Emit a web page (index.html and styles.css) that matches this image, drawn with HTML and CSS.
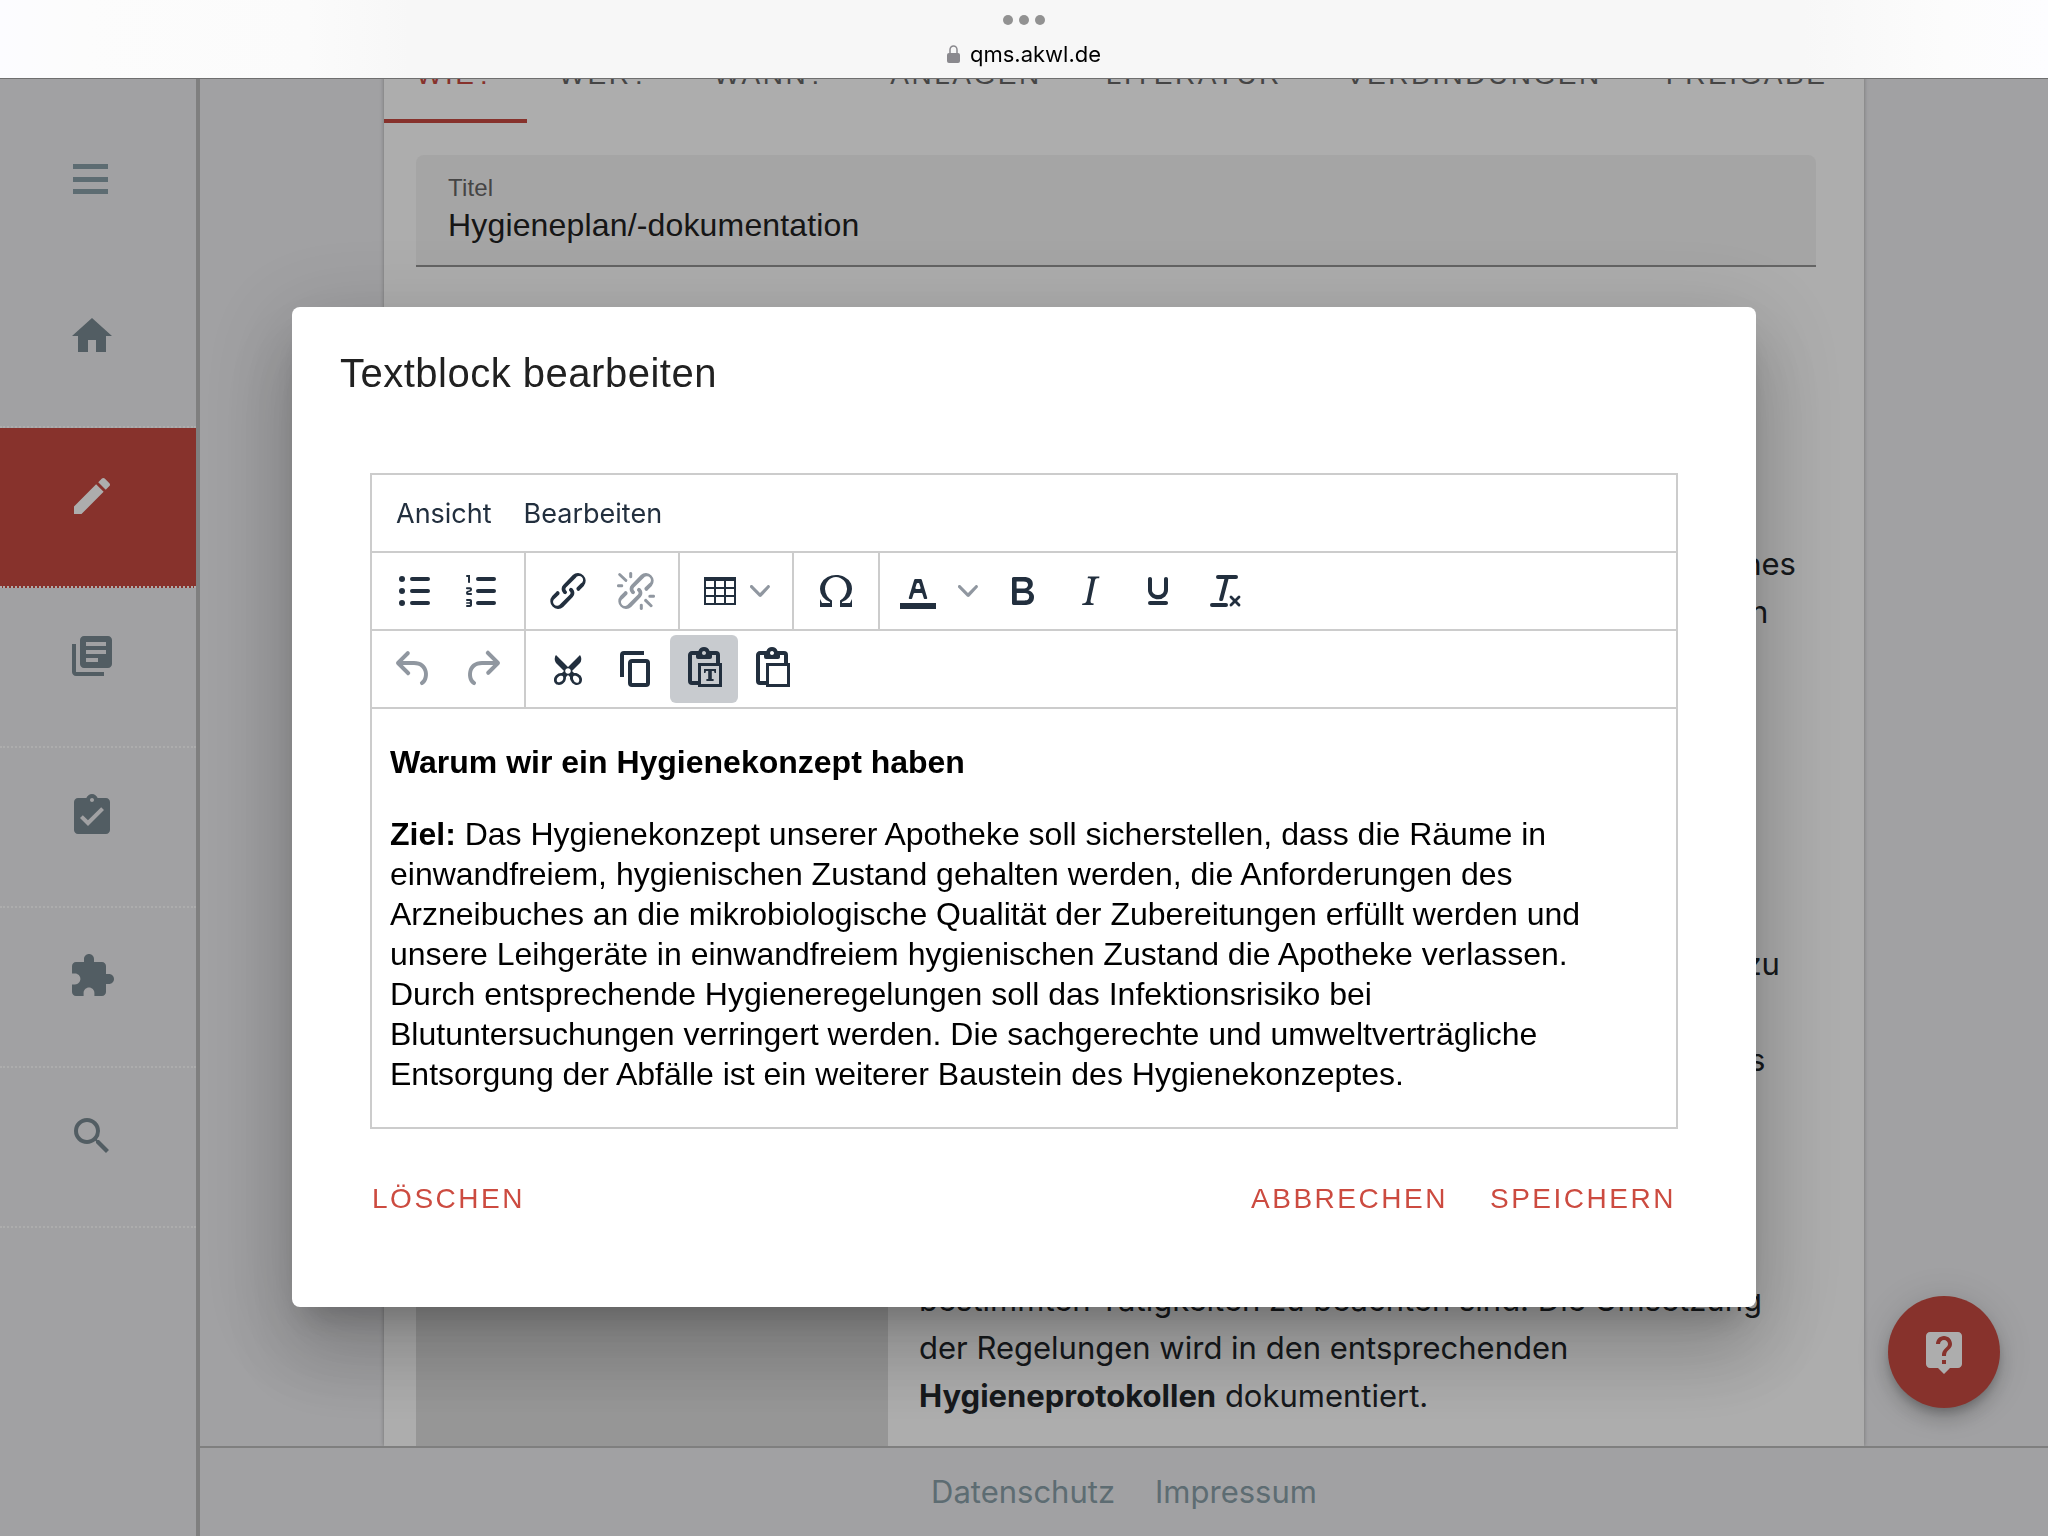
FILE: index.html
```html
<!DOCTYPE html>
<html lang="de">
<head>
<meta charset="utf-8">
<meta name="viewport" content="width=device-width, initial-scale=1">
<title>Hygieneplan/-dokumentation</title>
<link rel="stylesheet" href="styles.css">
</head>
<body>
<header class="topbar">
  <div class="topbar__dots"><span></span><span></span><span></span></div>
  <div class="topbar__url">
    <svg class="topbar__lock" viewBox="0 0 13 18" aria-hidden="true"><rect y="8" width="13" height="10" rx="2" fill="#8a898e"/><path d="M3 9V4.800a3.500 3.800 0 0 1 7 0V9" fill="none" stroke="#8a898e" stroke-width="1.500"/></svg>
    <span>qms.akwl.de</span>
  </div>
</header>

<div class="app">
  <nav class="sidebar" aria-label="Hauptmenü">
    <button class="sidebar__item sidebar__item--menu" type="button" aria-label="Menü">
      <svg class="icon" viewBox="0 0 48 48"><path d="M5 12h35v5H5zM5 25h35v5H5zM5 37h35v5H5z"/></svg>
    </button>
    <a class="sidebar__item" href="#" aria-label="Start">
      <svg class="icon" viewBox="0 0 24 24"><path d="M10 20v-6h4v6h5v-8h3L12 3 2 12h3v8h5z"/></svg>
    </a>
    <a class="sidebar__item sidebar__item--active" href="#" aria-label="Bearbeiten">
      <svg class="icon" viewBox="0 0 24 24"><path d="M20.710 7.040c.39-.39.39-1.040 0-1.410l-2.340-2.340c-.37-.39-1.020-.39-1.410 0l-1.840 1.830 3.750 3.750M3 17.250V21h3.750L17.810 9.930l-3.750-3.750L3 17.250z"/></svg>
    </a>
    <a class="sidebar__item" href="#" aria-label="Bibliothek">
      <svg class="icon" viewBox="0 0 24 24"><path d="M4 6H2v14c0 1.100.9 2 2 2h14v-2H4V6zm16-4H8c-1.100 0-2 .9-2 2v12c0 1.100.9 2 2 2h12c1.100 0 2-.9 2-2V4c0-1.100-.9-2-2-2zm-1 9H9V9h10v2zm-4 4H9v-2h6v2zm4-8H9V5h10v2z"/></svg>
    </a>
    <a class="sidebar__item" href="#" aria-label="Aufgaben">
      <svg class="icon" viewBox="0 0 24 24"><path fill-rule="evenodd" d="M19 3h-4.180C14.400 1.840 13.300 1 12 1s-2.400.84-2.820 2H5c-1.100 0-2 .9-2 2v14c0 1.100.9 2 2 2h14c1.100 0 2-.9 2-2V5c0-1.100-.9-2-2-2zm-7 0c.55 0 1 .45 1 1s-.45 1-1 1-1-.45-1-1 .45-1 1-1zm-2 14l-4-4 1.410-1.410L10 14.170l6.590-6.590L18 9l-8 8z"/></svg>
    </a>
    <a class="sidebar__item" href="#" aria-label="Erweiterungen">
      <svg class="icon" viewBox="0 0 24 24"><path d="M20.500 11H19V7c0-1.100-.9-2-2-2h-4V3.500C13 2.120 11.880 1 10.500 1S8 2.120 8 3.500V5H4c-1.100 0-1.990.9-1.990 2v3.800H3.500c1.490 0 2.700 1.210 2.700 2.700s-1.210 2.700-2.700 2.700H2V20c0 1.100.9 2 2 2h3.800v-1.500c0-1.490 1.210-2.700 2.700-2.700s2.700 1.210 2.700 2.700V22H17c1.100 0 2-.9 2-2v-4h1.500c1.380 0 2.500-1.120 2.500-2.500S21.880 11 20.500 11z"/></svg>
    </a>
    <a class="sidebar__item" href="#" aria-label="Suche">
      <svg class="icon" viewBox="0 0 24 24"><path d="M15.500 14h-.79l-.28-.27A6.470 6.470 0 0 0 16 9.500 6.500 6.500 0 1 0 9.500 16c1.610 0 3.090-.59 4.230-1.570l.27.28v.79l5 4.990L20.490 19l-4.990-5zm-6 0C7.010 14 5 11.990 5 9.500S7.010 5 9.500 5 14 7.010 14 9.500 11.990 14 9.500 14z"/></svg>
    </a>
  </nav>

  <div class="page">
    <main class="card">
      <div class="tabs" role="tablist">
        <button class="tab tab--active" type="button" role="tab" aria-selected="true">WIE?</button>
        <button class="tab" type="button" role="tab">WER?</button>
        <button class="tab" type="button" role="tab">WANN?</button>
        <button class="tab" type="button" role="tab">ANLAGEN</button>
        <button class="tab" type="button" role="tab">LITERATUR</button>
        <button class="tab" type="button" role="tab">VERBINDUNGEN</button>
        <button class="tab" type="button" role="tab">FREIGABE</button>
      </div>
      <div class="card__body">
        <div class="field">
          <label class="field__label" for="titel">Titel</label>
          <input class="field__input" id="titel" type="text" value="Hygieneplan/-dokumentation">
        </div>
        <section class="block">
          <div class="block__side"></div>
          <div class="block__text">
            <p>Hygiene in der Apotheke<br>
            und ihre Umsetzung<br>
            Ein Hygieneplan beschreibt die Maßnahmen innerhalb eines<br>
            Betriebes, und legt somit die Verantwortung der Personen</p>
            <p>für die Durchführung fest.<br>
            Der Plan wird regelmäßig geprüft<br>
            und bei Bedarf angepasst.<br>
            Änderungen werden dokumentiert<br>
            und allen bekannt gegeben.<br>
            Schulungen finden jährlich statt.<br>
            Alle Mitarbeiter sind verpflichtet, die Regelungen soweit zu<br>
            beachten.<br>
            Sie gelten immer für alle Räume und Geräte des Betriebes<br>
            und nennen alle Punkte, die<br>
            in den Bereichen und bei<br>
            den einzelnen Schritten sowie<br>
            in der täglichen Arbeit bei<br>
            bestimmten Tätigkeiten zu beachten sind. Die Umsetzung<br>
            der Regelungen wird in den entsprechenden<br>
            <strong>Hygieneprotokollen</strong> dokumentiert.</p>
          </div>
        </section>
      </div>
    </main>
    <footer class="footer">
      <a href="#">Datenschutz</a>
      <a href="#">Impressum</a>
    </footer>
  </div>
</div>

<button class="fab" type="button" aria-label="Hilfe">
  <svg class="icon" viewBox="0 0 24 24"><path d="M19 2H5c-1.100 0-2 .9-2 2v14c0 1.100.9 2 2 2h4l3 3 3-3h4c1.100 0 2-.9 2-2V4c0-1.100-.9-2-2-2zm-6 16h-2v-2h2v2zm2.070-7.750l-.9.92C13.450 11.900 13 12.500 13 14h-2v-.5c0-1.100.45-2.100 1.170-2.830l1.240-1.260c.37-.36.59-.86.59-1.410 0-1.100-.9-2-2-2s-2 .9-2 2H8c0-2.210 1.790-4 4-4s4 1.790 4 4c0 .88-.36 1.680-.93 2.250z"/></svg>
</button>

<div class="overlay">
  <div class="dialog" role="dialog" aria-modal="true" aria-labelledby="dialog-title">
    <h2 class="dialog__title" id="dialog-title">Textblock bearbeiten</h2>
    <div class="editor">
      <div class="editor__menubar">
        <button class="menu-btn" type="button">Ansicht</button>
        <button class="menu-btn" type="button">Bearbeiten</button>
      </div>
      <div class="toolbar">
        <div class="toolbar__group">
          <button class="tool" type="button" aria-label="Aufzählung"><svg class="icon" viewBox="0 0 24 24"><path d="M11 5h8a1 1 0 0 1 0 2h-8a1 1 0 0 1 0-2zm0 6h8a1 1 0 0 1 0 2h-8a1 1 0 0 1 0-2zm0 6h8a1 1 0 0 1 0 2h-8a1 1 0 0 1 0-2z"/><circle cx="6" cy="6" r="1.500"/><circle cx="6" cy="12" r="1.500"/><circle cx="6" cy="18" r="1.500"/></svg></button>
          <button class="tool" type="button" aria-label="Nummerierte Liste"><svg class="icon" viewBox="0 0 24 24"><path d="M10 17h8a1 1 0 0 1 0 2h-8a1 1 0 0 1 0-2zm0-6h8a1 1 0 0 1 0 2h-8a1 1 0 0 1 0-2zm0-6h8a1 1 0 1 1 0 2h-8a1 1 0 1 1 0-2zM6 4v3.500c0 .3-.2.5-.5.5a.5.5 0 0 1-.5-.5V5h-.5a.5.5 0 0 1 0-1H6zm-1 8.800l.2.2h1.300c.3 0 .5.2.5.5s-.2.5-.5.5H4.900a1 1 0 0 1-.9-1V13c0-.4.3-.8.6-1l1.200-.4.2-.3a.2.2 0 0 0-.2-.2H4.500a.5.5 0 0 1-.5-.5c0-.3.2-.5.5-.5h1.600c.5 0 .9.4.9 1v.1c0 .4-.3.8-.6 1l-1.200.4-.2.3zM7 17v2c0 .6-.4 1-1 1H4.500a.5.5 0 0 1 0-1h1.200c.2 0 .3-.1.3-.3 0-.2-.1-.3-.3-.3H4.400a.4.4 0 1 1 0-.8h1.300c.2 0 .3-.1.3-.3 0-.2-.1-.3-.3-.3H4.500a.5.5 0 1 1 0-1H6c.6 0 1 .4 1 1z"/></svg></button>
        </div>
        <div class="toolbar__group">
          <button class="tool" type="button" aria-label="Link"><svg class="icon" viewBox="0 0 24 24"><path d="M6.200 12.300a1 1 0 0 1 1.400 1.400l-2.100 2a2 2 0 1 0 2.700 2.800l4.800-4.800a1 1 0 0 0 0-1.400 1 1 0 1 1 1.400-1.300 2.900 2.900 0 0 1 0 4L9.600 20a3.900 3.900 0 0 1-5.500-5.500l2-2zm11.600-.6a1 1 0 0 1-1.400-1.400l2-2a2 2 0 1 0-2.600-2.800L11 10.300a1 1 0 0 0 0 1.400A1 1 0 1 1 9.600 13a2.900 2.900 0 0 1 0-4L14.400 4a3.900 3.900 0 0 1 5.500 5.500l-2 2z"/></svg></button>
          <button class="tool tool--disabled" type="button" disabled aria-label="Link entfernen"><svg class="icon" viewBox="0 0 24 24"><path d="M6.200 12.300a1 1 0 0 1 1.400 1.400l-2 2a2 2 0 1 0 2.600 2.800l4.800-4.800a1 1 0 0 0 0-1.400 1 1 0 1 1 1.400-1.300 2.900 2.900 0 0 1 0 4L9.600 20a3.900 3.900 0 0 1-5.500-5.500l2-2zm11.600-.6a1 1 0 0 1-1.400-1.400l2.100-2a2 2 0 1 0-2.700-2.800L11 10.300a1 1 0 0 0 0 1.400A1 1 0 1 1 9.600 13a2.900 2.900 0 0 1 0-4L14.400 4a3.900 3.900 0 0 1 5.500 5.500l-2 2zM7.600 6.300a.8.8 0 0 1-1 1.100L3.300 4.200a.7.7 0 1 1 1-1l3.200 3.100zM5.100 8.600a.8.8 0 0 1 0 1.500H3a.8.8 0 0 1 0-1.500h2.100zm5-3.500a.8.8 0 0 1-1.500 0V3a.8.8 0 0 1 1.500 0v2.100zm6 11.800a.8.8 0 0 1 1-1l3.200 3.200a.8.8 0 0 1-1 1L16 17zm-2.200 2a.8.8 0 0 1 1.500 0V21a.8.8 0 0 1-1.500 0v-2.100zm5-3.500a.7.7 0 1 1 0-1.500H21a.8.8 0 0 1 0 1.500h-2.100z"/></svg></button>
        </div>
        <div class="toolbar__group">
          <button class="tool tool--select" type="button" aria-label="Tabelle"><svg class="icon" viewBox="0 0 24 24"><path fill-rule="evenodd" d="M4 5h16v14H4zM5 7v3h4V7zm5 0v3h4V7zm5 0v3h4V7zM5 11v3h4v-3zm5 0v3h4v-3zm5 0v3h4v-3zM5 15v3h4v-3zm5 0v3h4v-3zm5 0v3h4v-3z"/></svg><svg class="chevron" viewBox="0 0 10 10"><path d="M8.700 2.200c.3-.3.8-.3 1 0 .4.4.4.9 0 1.200L5.700 7.800c-.3.3-.9.3-1.200 0L.2 3.400a.8.8 0 0 1 0-1.200c.3-.3.8-.3 1.100 0L5 6l3.700-3.800z"/></svg></button>
        </div>
        <div class="toolbar__group">
          <button class="tool" type="button" aria-label="Sonderzeichen"><svg class="icon" viewBox="0 0 24 24"><path d="M15 18h4l1-2v4h-6v-3.300l1.400-1a6 6 0 0 0 1.800-2.900 6.300 6.300 0 0 0-.1-4.100 5.800 5.800 0 0 0-3-3.200c-.6-.3-1.300-.5-2.100-.5a5.100 5.100 0 0 0-3.900 1.800 6.300 6.300 0 0 0-1.300 6 6.200 6.200 0 0 0 1.800 3l1.400.9V20H4v-4l1 2h4v-.5l-2-1L5.400 15A6.500 6.500 0 0 1 4 11c0-1 .2-1.900.6-2.700A7 7 0 0 1 7.800 5 9 9 0 0 1 12 4c1.500 0 2.900.3 4.200 1a7.100 7.100 0 0 1 3.300 3.300c.3.8.5 1.700.5 2.700a6.500 6.500 0 0 1-1.400 4L17 16.500l-2 1v.5z"/></svg></button>
        </div>
        <div class="toolbar__group">
          <button class="tool tool--color" type="button" aria-label="Textfarbe"><svg class="icon" viewBox="0 0 24 24"><path d="M3 18h18v3H3z"/><path fill-rule="evenodd" d="M8.700 16h-.8a.5.5 0 0 1-.5-.6l2.700-9c.1-.3.3-.4.5-.4h2.800c.2 0 .4.1.5.4l2.700 9a.5.5 0 0 1-.5.6h-.8a.5.5 0 0 1-.4-.4l-.7-2.200c0-.3-.3-.4-.5-.4h-3.400c-.2 0-.4.1-.5.4l-.7 2.200c0 .3-.2.4-.4.4zm2.600-7.600l-.6 2a.5.5 0 0 0 .5.6h1.600a.5.5 0 0 0 .5-.6l-.6-2c0-.3-.3-.4-.5-.4h-.4c-.2 0-.4.1-.5.4z"/></svg></button>
          <button class="tool tool--arrow" type="button" aria-label="Farbe wählen"><svg class="chevron" viewBox="0 0 10 10"><path d="M8.700 2.200c.3-.3.8-.3 1 0 .4.4.4.9 0 1.200L5.700 7.800c-.3.3-.9.3-1.200 0L.2 3.400a.8.8 0 0 1 0-1.200c.3-.3.8-.3 1.100 0L5 6l3.700-3.800z"/></svg></button>
          <button class="tool" type="button" aria-label="Fett"><svg class="icon" viewBox="0 0 24 24"><path fill-rule="evenodd" d="M7.800 19c-.3 0-.5 0-.6-.2l-.2-.5V5.700c0-.2 0-.4.2-.5l.6-.2h5c1.500 0 2.700.3 3.500 1 .7.6 1.100 1.400 1.100 2.500a3 3 0 0 1-.6 1.900c-.4.6-1 1-1.600 1.200.4.1.9.3 1.300.6s.8.7 1 1.200c.4.4.5 1 .5 1.600 0 1.300-.4 2.300-1.300 3-.8.7-2.100 1-3.800 1H7.800zm5-8.300c.6 0 1.200-.1 1.600-.5.4-.3.6-.7.6-1.300 0-1.100-.8-1.700-2.300-1.700H9.300v3.500h3.500zm.5 6c.7 0 1.300-.1 1.700-.4.4-.4.6-.9.6-1.500s-.2-1-.7-1.400c-.4-.3-1-.4-2-.4H9.400v3.700h3.900z"/></svg></button>
          <button class="tool" type="button" aria-label="Kursiv"><svg class="icon" viewBox="0 0 24 24"><path d="M16.700 4.700l-.1.900h-.3c-.6 0-1 0-1.400.3-.3.3-.4.6-.5 1.100l-2.100 9.800v.6c0 .5.4.8 1.400.8h.2l-.2.8H8l.2-.8h.2c1.100 0 1.800-.5 2-1.500l2-9.800.1-.5c0-.6-.4-.8-1.400-.8h-.3l.2-.9h5.700z"/></svg></button>
          <button class="tool" type="button" aria-label="Unterstrichen"><svg class="icon" viewBox="0 0 24 24"><path d="M16 5c.6 0 1 .4 1 1v5.500a4 4 0 0 1-.4 1.800l-1 1.400a5.300 5.300 0 0 1-5.500 1 5 5 0 0 1-1.600-1c-.5-.4-.8-.9-1.100-1.400a4 4 0 0 1-.4-1.800V6c0-.6.4-1 1-1s1 .4 1 1v5.500c0 .3 0 .6.2 1l.6.7a3.300 3.300 0 0 0 2.200.8 3.400 3.400 0 0 0 2.200-.8c.3-.2.4-.5.6-.8l.2-.9V6c0-.6.4-1 1-1zM8 17h8c.6 0 1 .4 1 1s-.4 1-1 1H8a1 1 0 0 1 0-2z"/></svg></button>
          <button class="tool" type="button" aria-label="Formatierung entfernen"><svg class="icon" viewBox="0 0 24 24"><path d="M13.200 6a1 1 0 0 1 0 .2l-2.600 10a1 1 0 0 1-1 .8h-.2a.8.8 0 0 1-.8-1l2.600-10H8a1 1 0 1 1 0-2h9a1 1 0 0 1 0 2h-3.800zM5 18h7a1 1 0 0 1 0 2H5a1 1 0 0 1 0-2zm13 1.500L16.500 18 15 19.500a.7.7 0 0 1-1-1l1.500-1.500-1.500-1.500a.7.7 0 0 1 1-1l1.500 1.500 1.500-1.500a.7.7 0 0 1 1 1L17.500 17l1.500 1.500a.7.7 0 0 1-1 1z"/></svg></button>
        </div>
      </div>
      <div class="toolbar">
        <div class="toolbar__group">
          <button class="tool tool--disabled" type="button" disabled aria-label="Rückgängig"><svg class="icon" viewBox="0 0 24 24"><path d="M6.400 8H12c3.700 0 6.200 2 6.800 5.100.6 2.700-.4 5.600-2.300 6.800a1 1 0 0 1-1-1.800c1.100-.6 1.800-2.700 1.400-4.600-.5-2.100-2.100-3.500-4.900-3.500H6.400l3.300 3.300a1 1 0 1 1-1.400 1.400l-5-5a1 1 0 0 1 0-1.400l5-5a1 1 0 0 1 1.400 1.400L6.400 8z"/></svg></button>
          <button class="tool tool--disabled" type="button" disabled aria-label="Wiederholen"><svg class="icon" viewBox="0 0 24 24"><path d="M17.600 10H12c-2.800 0-4.400 1.400-4.900 3.500-.4 2 .3 4 1.400 4.600a1 1 0 1 1-1 1.800c-2-1.200-2.900-4.100-2.300-6.800.6-3 3-5.100 6.800-5.100h5.600l-3.300-3.300a1 1 0 1 1 1.400-1.400l5 5a1 1 0 0 1 0 1.400l-5 5a1 1 0 0 1-1.400-1.400l3.300-3.300z"/></svg></button>
        </div>
        <div class="toolbar__group">
          <button class="tool" type="button" aria-label="Ausschneiden"><svg class="icon" viewBox="0 0 24 24"><path fill-rule="evenodd" d="M18 15c.6.7 1 1.400 1 2.300 0 .8-.2 1.500-.7 2l-.8.5-1 .2c-.4 0-.8 0-1.200-.3a3.900 3.900 0 0 1-2.100-2.200c-.2-.5-.3-1-.2-1.500l-1-1-1 1c0 .5 0 1-.2 1.500-.1.5-.4 1-.9 1.400-.3.4-.7.6-1.200.8l-1.200.3c-.4 0-.7 0-1-.2-.3 0-.6-.3-.8-.5-.5-.5-.8-1.200-.7-2 0-.9.4-1.600 1-2.200A3.700 3.700 0 0 1 8.600 14H9l1-1-4-4-.5-1a3.300 3.300 0 0 1 0-2c0-.4.3-.7.500-1l6 6 6-6 .5 1a3.300 3.300 0 0 1 0 2c0 .4-.3.7-.5 1l-4 4 1 1h.5c.4 0 .8 0 1.200.3.5.2.9.4 1.200.8zm-8.500 2.200l.1-.4v-.7a1 1 0 0 0-.2-.5 1 1 0 0 0-.4-.2 1.600 1.600 0 0 0-.8 0 2.600 2.600 0 0 0-.8.3 2.500 2.500 0 0 0-.9 1.100l-.1.400v.7l.2.500.5.200h.7a2.500 2.500 0 0 0 .8-.3 2.800 2.800 0 0 0 .9-1.100zm2.500-2.800c.4 0 .7-.1 1-.4.3-.3.4-.6.4-1s-.1-.7-.4-1c-.3-.3-.6-.4-1-.4s-.7.1-1 .4c-.3.3-.4.6-.4 1s.1.700.400 1c.3.300.6.400 1 .4zm5.400 4l.2-.5v-.7a2.400 2.400 0 0 0-.3-.8 2.500 2.500 0 0 0-1.500-1 1.600 1.600 0 0 0-.8 0 1 1 0 0 0-.5.700 1 1 0 0 0 0 .4v.3l.1.400a2.700 2.700 0 0 0 1.700 1.700h.8z"/></svg></button>
          <button class="tool" type="button" aria-label="Kopieren"><svg class="icon" viewBox="0 0 24 24"><path fill-rule="evenodd" d="M16 3H6a2 2 0 0 0-2 2v11h2V5h10V3zm1 4a2 2 0 0 1 2 2v10a2 2 0 0 1-2 2h-7a2 2 0 0 1-2-2V9c0-1.200.9-2 2-2h7zm0 12V9h-7v10h7z"/></svg></button>
          <button class="tool tool--on" type="button" aria-pressed="true" aria-label="Als Text einfügen"><svg class="icon" viewBox="0 0 24 24"><path fill-rule="evenodd" d="M18 9V5h-2v1c0 .6-.4 1-1 1H9a1 1 0 0 1-1-1V5H6v13h3V9h9zM9 20H6a2 2 0 0 1-2-2V5c0-1.100.9-2 2-2h3.200A3 3 0 0 1 12 1a3 3 0 0 1 2.800 2H18a2 2 0 0 1 2 2v4h1v12H9v-1zm1.500-9.500v9h9v-9h-9zM12 3a1 1 0 0 0-1 1c0 .5.4 1 1 1s1-.5 1-1-.4-1-1-1z"/><path d="M12 12h6v2h-.7l-.3-1h-1.100v4h.9v1h-3.600v-1h.9v-4H13l-.3 1H12v-2z"/></svg></button>
          <button class="tool" type="button" aria-label="Einfügen"><svg class="icon" viewBox="0 0 24 24"><path fill-rule="evenodd" d="M18 9V5h-2v1c0 .6-.4 1-1 1H9a1 1 0 0 1-1-1V5H6v13h3V9h9zM9 20H6a2 2 0 0 1-2-2V5c0-1.100.9-2 2-2h3.200A3 3 0 0 1 12 1a3 3 0 0 1 2.800 2H18a2 2 0 0 1 2 2v4h1v12H9v-1zm1.500-9.500v9h9v-9h-9zM12 3a1 1 0 0 0-1 1c0 .5.4 1 1 1s1-.5 1-1-.4-1-1-1z"/></svg></button>
        </div>
      </div>
      <div class="editor__content" contenteditable="true" spellcheck="false" role="textbox" aria-multiline="true" aria-label="Textblock">
        <p><strong>Warum wir ein Hygienekonzept haben</strong></p>
        <p><strong>Ziel:</strong> Das Hygienekonzept unserer Apotheke soll sicherstellen, dass die Räume in einwandfreiem, hygienischen Zustand gehalten werden, die Anforderungen des Arzneibuches an die mikrobiologische Qualität der Zubereitungen erfüllt werden und unsere Leihgeräte in einwandfreiem hygienischen Zustand die Apotheke verlassen. Durch entsprechende Hygieneregelungen soll das Infektionsrisiko bei Blutuntersuchungen verringert werden. Die sachgerechte und umweltverträgliche Entsorgung der Abfälle ist ein weiterer Baustein des Hygienekonzeptes.</p>
      </div>
    </div>
    <div class="dialog__actions">
      <button class="action action--start" type="button">LÖSCHEN</button>
      <button class="action" type="button">ABBRECHEN</button>
      <button class="action" type="button">SPEICHERN</button>
    </div>
  </div>
</div>
</body>
</html>
```
FILE: styles.css
```css
:root {
  --sans: "Liberation Sans", Arial, sans-serif;
  --ui: Inter, "Noto Sans", sans-serif;
  --red: #c84a41;
  --grey-bg: #ededf0;
  --line: #bcbcbc;
  --ink: #222f3e;
}

* { box-sizing: border-box; }

body {
  margin: 0;
  background: var(--grey-bg);
  color: #212529;
  font-family: var(--sans);
}

button {
  margin: 0;
  padding: 0;
  border: 0;
  background: none;
  color: inherit;
  font: inherit;
}

p { margin: 0; }

.icon {
  display: block;
  flex: none;
  width: 48px;
  height: 48px;
  fill: currentColor;
}

/* Browser bar */
.topbar {
  position: fixed;
  z-index: 3;
  inset: 0 0 auto;
  display: flex;
  flex-direction: column;
  align-items: center;
  gap: 15px;
  height: 79px;
  padding-top: 15px;
  border-bottom: 1px solid #6f6f6f;
  background: linear-gradient(90deg, #fcfcff, #fcfcfc 4%, #fbfbfb 15%, #f7f7f7 20%, #f7f7f7 88%, #fcfcfc 95%, #fdfdff);
}
.topbar__dots { display: flex; gap: 6px; }
.topbar__dots span {
  width: 10px;
  height: 10px;
  border-radius: 50%;
  background: #929292;
}
.topbar__url {
  display: flex;
  align-items: center;
  gap: 10px;
  color: #000;
  font: 22px/28px var(--ui);
}
.topbar__lock { width: 13px; height: 18px; }

/* Page frame */
.app {
  display: grid;
  grid-template-columns: 200px minmax(0, 1fr);
  min-height: 100vh;
}

.sidebar {
  display: flex;
  flex-direction: column;
  padding-top: 108px;
  border-right: 4px solid var(--line);
}
.sidebar__item {
  display: flex;
  justify-content: center;
  height: 160px;
  padding: 44px 12px 0 0;
  border-bottom: 2px dotted #fff;
  color: #7a8a92;
}
.sidebar__item--menu {
  border-bottom-color: transparent;
  color: #899fa8;
}
.sidebar__item--active {
  background: var(--red);
  color: #fff;
}

.page {
  display: flex;
  flex-direction: column;
  min-width: 0;
}
.card {
  flex: 1;
  width: calc(100% - 64px);
  max-width: 1480px;
  margin: 0 auto;
  padding-top: 27px;
  background: #fff;
  box-shadow: 0 0 4px rgba(0, 0, 0, .3);
}
.card__body { padding: 32px 48px 26px 32px; }

.tabs { display: flex; }
.tab {
  height: 96px;
  padding: 4px 32px 0;
  border-bottom: 4px solid transparent;
  color: #666;
  font-size: 28px;
  line-height: 32px;
  letter-spacing: .09em;
  white-space: nowrap;
}
.tab--active {
  border-color: var(--red);
  color: var(--red);
}

.field {
  display: flex;
  flex-direction: column;
  height: 112px;
  padding: 17px 32px 0;
  border-bottom: 2px solid #949494;
  border-radius: 8px 8px 0 0;
  background: #f4f4f4;
  letter-spacing: .01em;
}
.field__label {
  color: #666;
  font-size: 24px;
  line-height: 32px;
}
.field__input {
  height: 42px;
  padding: 0;
  border: 0;
  background: none;
  color: #212121;
  font: 32px/42px var(--sans);
  letter-spacing: inherit;
}

.block {
  display: grid;
  grid-template-columns: 472px minmax(0, 1fr);
  margin-top: 177px;
}
.block__side {
  margin-bottom: -26px;
  background: #dedede;
}
.block__text {
  padding-left: 31px;
  font: 31px/48px var(--ui);
  white-space: nowrap;
}
.block__text p + p { margin-top: 16px; }

.footer {
  display: flex;
  justify-content: center;
  gap: 40px;
  padding: 24px;
  border-top: 2px solid var(--line);
  background: var(--grey-bg);
  font: 31px/40px var(--ui);
}
.footer a {
  color: #899fa8;
  text-decoration: none;
}

.fab {
  position: fixed;
  right: 48px;
  bottom: 128px;
  display: flex;
  align-items: center;
  justify-content: center;
  width: 112px;
  height: 112px;
  border-radius: 50%;
  background: var(--red);
  box-shadow: 0 6px 10px -2px rgba(0, 0, 0, .2), 0 12px 20px rgba(0, 0, 0, .14), 0 2px 36px rgba(0, 0, 0, .12);
  color: #fff;
}

/* Dialog */
.overlay {
  position: fixed;
  z-index: 2;
  inset: 78px 0 0;
  display: flex;
  align-items: center;
  justify-content: center;
  padding: 48px;
  background: rgba(0, 0, 0, .32);
}
.dialog {
  width: 100%;
  max-width: 1464px;
  padding: 34px 78px 72px;
  border-radius: 8px;
  background: #fff;
  box-shadow: 0 22px 30px -14px rgba(0, 0, 0, .2), 0 48px 76px 6px rgba(0, 0, 0, .14), 0 18px 92px 16px rgba(0, 0, 0, .12);
}
.dialog__title {
  margin: 0 -30px 68px;
  color: #212121;
  font-size: 40px;
  font-weight: 400;
  line-height: 64px;
  letter-spacing: .0125em;
}
.dialog__actions {
  display: flex;
  gap: 42px;
  margin-top: 34px;
  padding: 0 2px;
}
.action {
  height: 72px;
  color: #cc4b40;
  font-size: 28px;
  line-height: 32px;
  letter-spacing: .09em;
}
.action--start { margin-right: auto; }

/* Editor */
.editor { border: 2px solid #ccc; }
.editor__menubar,
.toolbar {
  display: flex;
  border-bottom: 2px solid #ccc;
}
.editor__menubar { padding: 0 8px; }
.menu-btn {
  height: 76px;
  padding: 2px 16px 0;
  color: var(--ink);
  font: 27px/32px var(--ui);
}
.toolbar__group {
  display: flex;
  padding: 4px 8px;
}
.toolbar__group + .toolbar__group { border-left: 2px solid #ccc; }
.tool {
  display: flex;
  align-items: center;
  justify-content: center;
  width: 68px;
  height: 68px;
  border-radius: 6px;
  color: var(--ink);
}
.tool--select {
  justify-content: flex-start;
  gap: 6px;
  width: 96px;
  padding-left: 8px;
}
.tool--color { width: 60px; }
.tool--arrow { width: 40px; }
.tool--disabled { color: #9097a0; }
.tool--on { background: #c8cbcf; }
.chevron {
  flex: none;
  width: 20px;
  height: 20px;
  fill: #9097a0;
}
.editor__content {
  padding: 33px 18px;
  color: #000;
  font-size: 32px;
  line-height: 40px;
  outline: 0;
}
.editor__content p + p { margin-top: 32px; }
```
